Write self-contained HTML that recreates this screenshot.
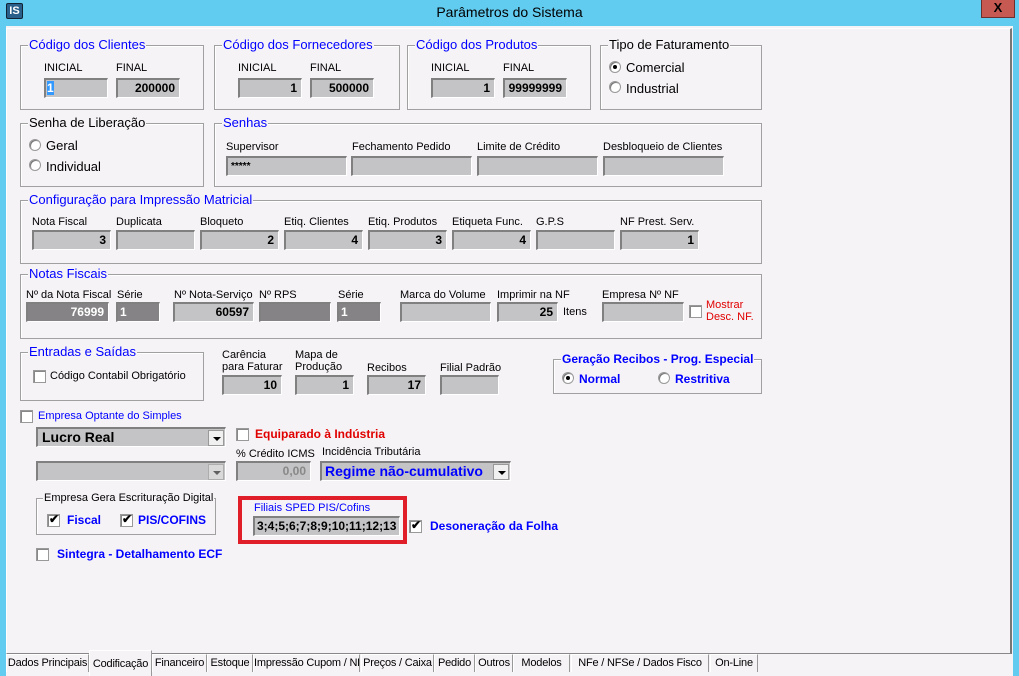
<!DOCTYPE html>
<html><head><meta charset="utf-8"><style>
*{box-sizing:border-box}
html{overflow:hidden;height:676px}
body{margin:0;width:1019px;height:676px;overflow:hidden;background:#62cbf0;font-family:"Liberation Sans",sans-serif;font-size:11px;color:#000;position:relative}
.a{position:absolute;white-space:nowrap}
#client{position:absolute;left:6px;top:26px;width:1007px;height:650px;background:#f6f3f6}
#panel{position:absolute;left:6px;top:28px;width:1006px;height:626px;border-top:1px solid #fff;border-left:1px solid #fff;border-right:2px solid #777;border-bottom:1px solid #888;background:#f6f3f6}
.g{position:absolute;border:1px solid #a0a0a0;box-shadow:1px 1px 0 #fff inset}
.gt{position:absolute;top:-9px;left:7px;background:#f6f3f6;padding:0 1px;font-size:13px;color:#0000ff;line-height:16px;white-space:nowrap}
.in{position:absolute;height:20px;background:#c4c3c5;border-top:2px solid #808080;border-left:2px solid #808080;border-right:1px solid #fff;border-bottom:1px solid #fff;font-weight:bold;font-size:12px;text-align:right;padding-right:4px;line-height:17px;white-space:nowrap}
.dk{background:#858385;color:#fff}
.l{position:absolute;font-size:11px;white-space:nowrap}
.rb{position:absolute;width:12px;height:12px;border-radius:50%;background:#fff;border:1px solid #999;box-shadow:inset 1px 1px 0 #777}
.rb.on::after{content:"";position:absolute;left:3px;top:3px;width:4px;height:4px;border-radius:50%;background:#000}
.cb{position:absolute;width:13px;height:13px;background:#fff;border:1px solid #999;box-shadow:inset 1px 1px 0 #888}
.cb.on::after{content:"✔";position:absolute;left:1px;top:-3px;font-size:12px;font-weight:bold}
.tab{position:absolute;top:654px;height:18px;border:1px solid #999;border-top-color:#fff;border-left-color:#fff;border-bottom:none;font-size:11px;line-height:17px;text-align:center;background:#f6f3f6;white-space:nowrap;overflow:hidden;letter-spacing:-0.2px}
.dd{position:absolute;width:16px;height:16px;right:1px;top:1px;background:#f0f0f0;border:1px solid #999}
.dd::after{content:"";position:absolute;left:4px;top:6px;border-left:4px solid transparent;border-right:4px solid transparent;border-top:4px solid #000}
</style></head><body>
<div class="a" style="left:6px;top:3px;width:17px;height:16px;background:#2a5f8a;border:1px solid #123;color:#fff;font-size:11px;font-weight:bold;line-height:14px;text-align:center;border-radius:2px">IS</div>
<div class="a" style="left:0;top:3px;width:1019px;text-align:center;font-size:14px;line-height:18px;color:#000">Parâmetros do Sistema</div>
<div class="a" style="left:981px;top:0;width:34px;height:18px;background:#c65a52;border:1px solid #6a3030;border-top:none;text-align:center;font-weight:bold;font-size:13px;line-height:16px">X</div>
<div id="client"></div>
<div id="panel"></div>

<div class="g" style="left:20px;top:45px;width:184px;height:65px"><span class="gt">Código dos Clientes</span></div>
<div class="l" style="left:44px;top:62px">INICIAL</div><div class="l" style="left:116px;top:62px">FINAL</div>
<div class="in" style="left:44px;top:78px;width:64px;text-align:left;padding-left:1px"><span style="background:#3399ff;color:#fff">1</span></div>
<div class="in" style="left:116px;top:78px;width:64px">200000</div>
<div class="g" style="left:214px;top:45px;width:186px;height:65px"><span class="gt">Código dos Fornecedores</span></div>
<div class="l" style="left:238px;top:62px">INICIAL</div><div class="l" style="left:310px;top:62px">FINAL</div>
<div class="in" style="left:238px;top:78px;width:64px">1</div>
<div class="in" style="left:310px;top:78px;width:64px">500000</div>
<div class="g" style="left:407px;top:45px;width:184px;height:65px"><span class="gt">Código dos Produtos</span></div>
<div class="l" style="left:431px;top:62px">INICIAL</div><div class="l" style="left:503px;top:62px">FINAL</div>
<div class="in" style="left:431px;top:78px;width:64px">1</div>
<div class="in" style="left:503px;top:78px;width:64px">99999999</div>
<div class="g" style="left:600px;top:45px;width:162px;height:65px"><span class="gt" style="color:#000">Tipo de Faturamento</span></div>
<div class="rb on" style="left:609px;top:61px"></div><div class="l" style="left:626px;top:60px;font-size:13px">Comercial</div>
<div class="rb" style="left:609px;top:81px"></div><div class="l" style="left:626px;top:81px;font-size:13px">Industrial</div>

<div class="g" style="left:20px;top:123px;width:184px;height:64px"><span class="gt" style="color:#000">Senha de Liberação</span></div>
<div class="rb" style="left:29px;top:139px"></div><div class="l" style="left:46px;top:138px;font-size:13px">Geral</div>
<div class="rb" style="left:29px;top:159px"></div><div class="l" style="left:46px;top:159px;font-size:13px">Individual</div>
<div class="g" style="left:214px;top:123px;width:548px;height:64px"><span class="gt">Senhas</span></div>
<div class="l" style="left:226px;top:141px">Supervisor</div><div class="l" style="left:352px;top:141px">Fechamento Pedido</div><div class="l" style="left:477px;top:141px">Limite de Crédito</div><div class="l" style="left:603px;top:141px">Desbloqueio de Clientes</div>
<div class="in" style="left:226px;top:156px;width:121px;text-align:left;padding-left:3px;font-size:10px">*****</div>
<div class="in" style="left:351px;top:156px;width:121px"></div>
<div class="in" style="left:477px;top:156px;width:121px"></div>
<div class="in" style="left:603px;top:156px;width:121px"></div>

<div class="g" style="left:20px;top:200px;width:742px;height:64px"><span class="gt">Configuração para Impressão Matricial</span></div>
<div class="l" style="left:32px;top:216px">Nota Fiscal</div><div class="l" style="left:116px;top:216px">Duplicata</div><div class="l" style="left:200px;top:216px">Bloqueto</div><div class="l" style="left:284px;top:216px">Etiq. Clientes</div><div class="l" style="left:368px;top:216px">Etiq. Produtos</div><div class="l" style="left:452px;top:216px">Etiqueta Func.</div><div class="l" style="left:536px;top:216px">G.P.S</div><div class="l" style="left:620px;top:216px">NF Prest. Serv.</div>
<div class="in" style="left:32px;top:230px;width:79px">3</div>
<div class="in" style="left:116px;top:230px;width:79px"></div>
<div class="in" style="left:200px;top:230px;width:79px">2</div>
<div class="in" style="left:284px;top:230px;width:79px">4</div>
<div class="in" style="left:368px;top:230px;width:79px">3</div>
<div class="in" style="left:452px;top:230px;width:79px">4</div>
<div class="in" style="left:536px;top:230px;width:79px"></div>
<div class="in" style="left:620px;top:230px;width:79px">1</div>

<div class="g" style="left:20px;top:274px;width:742px;height:65px"><span class="gt">Notas Fiscais</span></div>
<div class="l" style="left:26px;top:289px">Nº da Nota Fiscal</div><div class="l" style="left:117px;top:289px">Série</div><div class="l" style="left:174px;top:289px">Nº Nota-Serviço</div><div class="l" style="left:259px;top:289px">Nº RPS</div><div class="l" style="left:338px;top:289px">Série</div><div class="l" style="left:400px;top:289px">Marca do Volume</div><div class="l" style="left:497px;top:289px">Imprimir na NF</div><div class="l" style="left:602px;top:289px">Empresa Nº NF</div>
<div class="in dk" style="left:26px;top:302px;width:83px">76999</div>
<div class="in dk" style="left:116px;top:302px;width:44px;text-align:left;padding-left:2px">1</div>
<div class="in" style="left:173px;top:302px;width:81px">60597</div>
<div class="in dk" style="left:259px;top:302px;width:72px"></div>
<div class="in dk" style="left:337px;top:302px;width:44px;text-align:left;padding-left:2px">1</div>
<div class="in" style="left:400px;top:302px;width:91px"></div>
<div class="in" style="left:497px;top:302px;width:61px">25</div>
<div class="l" style="left:563px;top:306px">Itens</div>
<div class="in" style="left:602px;top:302px;width:82px"></div>
<div class="cb" style="left:689px;top:305px"></div>
<div class="l" style="left:706px;top:299px;color:#e00000;line-height:12px">Mostrar<br>Desc. NF.</div>

<div class="g" style="left:20px;top:352px;width:184px;height:49px"><span class="gt">Entradas e Saídas</span></div>
<div class="cb" style="left:33px;top:370px"></div><div class="l" style="left:50px;top:370px">Código Contabil Obrigatório</div>
<div class="l" style="left:222px;top:349px;line-height:12px">Carência<br>para Faturar</div>
<div class="l" style="left:295px;top:349px;line-height:12px">Mapa de<br>Produção</div>
<div class="l" style="left:367px;top:362px">Recibos</div>
<div class="l" style="left:440px;top:362px">Filial Padrão</div>
<div class="in" style="left:222px;top:375px;width:60px">10</div>
<div class="in" style="left:295px;top:375px;width:59px">1</div>
<div class="in" style="left:367px;top:375px;width:59px">17</div>
<div class="in" style="left:440px;top:375px;width:59px"></div>
<div class="g" style="left:553px;top:359px;width:209px;height:35px"><span class="gt" style="font-size:12px;font-weight:bold;left:7px">Geração Recibos - Prog. Especial</span></div>
<div class="rb on" style="left:562px;top:372px"></div><div class="l" style="left:579px;top:372px;font-weight:bold;color:#0000ff;font-size:12px">Normal</div>
<div class="rb" style="left:658px;top:372px"></div><div class="l" style="left:675px;top:372px;font-weight:bold;color:#0000ff;font-size:12px">Restritiva</div>

<div class="cb" style="left:20px;top:410px"></div><div class="l" style="left:38px;top:410px;color:#0000ff">Empresa Optante do Simples</div>
<div class="in" style="left:36px;top:427px;width:190px;text-align:left;padding-left:4px;font-size:14px;line-height:16px">Lucro Real<span class="dd"></span></div>
<div class="cb" style="left:236px;top:428px"></div><div class="l" style="left:255px;top:427px;font-weight:bold;color:#e00000;font-size:12px">Equiparado à Indústria</div>
<div class="in" style="left:36px;top:461px;width:190px"><span class="dd" style="opacity:.5"></span></div>
<div class="l" style="left:236px;top:448px">% Crédito ICMS</div>
<div class="in" style="left:236px;top:461px;width:75px;color:#888">0,00</div>
<div class="l" style="left:322px;top:446px">Incidência Tributária</div>
<div class="in" style="left:320px;top:461px;width:191px;text-align:left;padding-left:3px;color:#0000ff;font-size:14px;line-height:17px">Regime não-cumulativo<span class="dd"></span></div>

<div class="g" style="left:36px;top:498px;width:180px;height:37px"><span class="gt" style="color:#000;font-size:11px;left:6px">Empresa Gera Escrituração Digital</span></div>
<div class="cb on" style="left:47px;top:514px"></div><div class="l" style="left:67px;top:513px;font-weight:bold;color:#0000ff;font-size:12px">Fiscal</div>
<div class="cb on" style="left:120px;top:514px"></div><div class="l" style="left:138px;top:513px;font-weight:bold;color:#0000ff;font-size:12px">PIS/COFINS</div>
<div class="a" style="left:238px;top:496px;width:169px;height:48px;border:4px solid #e01e2a;background:#f6f3f6"></div>
<div class="l" style="left:254px;top:502px;color:#0000ff">Filiais SPED PIS/Cofins</div>
<div class="in" style="left:253px;top:516px;width:147px;text-align:left;padding-left:2px;overflow:hidden">3;4;5;6;7;8;9;10;11;12;13</div>
<div class="cb on" style="left:409px;top:520px"></div><div class="l" style="left:430px;top:519px;font-weight:bold;color:#0000ff;font-size:12px">Desoneração da Folha</div>
<div class="cb" style="left:36px;top:548px"></div><div class="l" style="left:57px;top:547px;font-weight:bold;color:#0000ff;font-size:12px">Sintegra - Detalhamento ECF</div>

<div class="tab" style="left:6px;width:83px">Dados Principais</div>
<div class="tab" style="left:89px;top:650px;height:26px;width:63px;z-index:2;line-height:26px">Codificação</div>
<div class="tab" style="left:152px;width:55px">Financeiro</div>
<div class="tab" style="left:207px;width:46px">Estoque</div>
<div class="tab" style="left:253px;width:107px">Impressão Cupom / NF</div>
<div class="tab" style="left:361px;width:73px">Preços / Caixa</div>
<div class="tab" style="left:434px;width:41px">Pedido</div>
<div class="tab" style="left:475px;width:38px">Outros</div>
<div class="tab" style="left:513px;width:57px">Modelos</div>
<div class="tab" style="left:571px;width:138px">NFe / NFSe / Dados Fisco</div>
<div class="tab" style="left:710px;width:48px">On-Line</div>
</body></html>
